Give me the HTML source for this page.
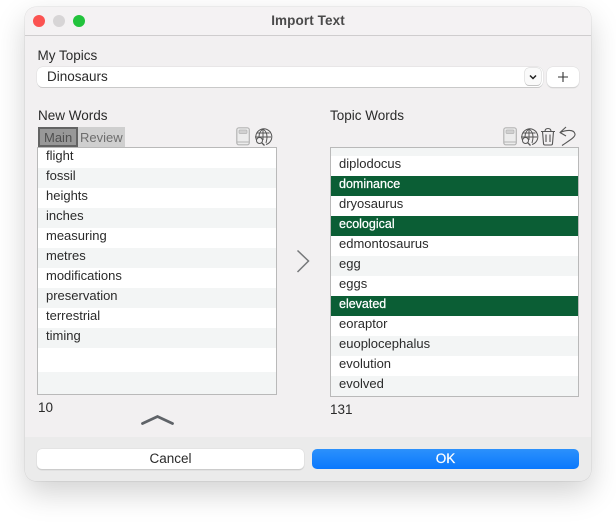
<!DOCTYPE html>
<html><head><meta charset="utf-8"><style>
html,body{margin:0;padding:0;background:#fff;width:616px;height:524px;overflow:hidden}
body{position:relative;font-family:"Liberation Sans",sans-serif;font-size:13px;color:#2a2a2a}
.a{position:absolute;white-space:nowrap}
.l{font-size:13.5px}
#win{position:absolute;left:25px;top:7px;width:566px;height:474px;border-radius:11px;background:#f2f0f1;box-shadow:0 0 0 .5px rgba(0,0,0,.1),0 12px 30px rgba(0,0,0,.18);}
.list{position:absolute;background:#fff;border:1px solid #b9b9b9;overflow:hidden;box-sizing:border-box}
.r{position:absolute;left:0;right:0;height:20px;line-height:16px;padding-left:8px;box-sizing:border-box}
.alt{background:#f3f5f5}.g{background:#0b5e35;color:#fff;font-size:12.5px;-webkit-text-stroke:.25px #fff}
svg{position:absolute;overflow:visible}
</style></head><body>
<div id="win"></div>
<div class="a" style="left:25px;top:7px;width:566px;height:29px;background:#f4f2f3;border-radius:11px 11px 0 0;border-bottom:1px solid #cfcdce;box-sizing:border-box"></div>
<div class="a" style="left:25px;top:437px;width:566px;height:44px;background:#ebebeb;border-radius:0 0 11px 11px"></div>
<div class="a" style="left:33px;top:15px;width:12px;height:12px;border-radius:50%;background:#fb5351"></div>
<div class="a" style="left:53px;top:15px;width:12px;height:12px;border-radius:50%;background:#d7d5d6"></div>
<div class="a" style="left:73px;top:15px;width:12px;height:12px;border-radius:50%;background:#22c33c"></div>
<div class="a" style="left:25px;width:566px;top:13px;text-align:center;font-weight:bold;font-size:13.5px;letter-spacing:.1px;color:#4a4a4a">Import Text</div>

<div class="a l" style="left:37.500px;top:48px">My Topics</div>
<div class="a" style="left:37px;top:67px;width:506px;height:20px;background:#fff;border-radius:6px;box-shadow:0 0 0 .5px #ddd,0 1px 0 #b5b5b5"></div>
<div class="a l" style="left:47px;top:69px">Dinosaurs</div>
<div class="a" style="left:525px;top:68px;width:16px;height:17px;background:#fafafa;border-radius:4px;box-shadow:0 0 0 .5px #ccc,0 1px 0 #bbb"></div>
<svg style="left:525px;top:68px" width="16" height="18"><path d="M5 7.500l3 3 3-3" fill="none" stroke="#222" stroke-width="1.500"/></svg>
<div class="a" style="left:547px;top:67px;width:32px;height:20px;background:#fff;border-radius:6px;box-shadow:0 0 0 .5px #ddd,0 1px 1px #bbb"></div>
<svg style="left:547px;top:67px" width="32" height="20"><path d="M16 5v10M11 10h10" stroke="#333" stroke-width="1.100"/></svg>

<div class="a l" style="left:38px;top:108px">New Words</div>
<div class="a" style="left:38px;top:127px;width:87px;height:20px;background:#cfcfcf"></div>
<div class="a" style="left:38px;top:127px;width:40px;height:20px;background:#989898;border:2px solid #636363;box-sizing:border-box"></div>
<div class="a" style="left:44px;top:130px;color:#4f4f4f">Main</div>
<div class="a" style="left:80px;top:130px;color:#6d6d6d">Review</div>

<svg style="left:236px;top:127px" width="15" height="19" fill="none"><rect x=".8" y=".8" width="12.500" height="17" rx="2" stroke="#b4b4b4" stroke-width="1.200" fill="#ececec"/><rect x="3" y="3" width="8" height="3.500" rx="1" fill="#d0d0d0" stroke="#b4b4b4" stroke-width=".7"/><path d="M1 15h12" stroke="#b4b4b4"/></svg>
<svg style="left:254px;top:128px" width="19" height="18" fill="none" stroke="#555" stroke-width="1"><path d="M3 13A8 8 0 1 1 12 16.500"/><path d="M1 9h16M2.500 5h13M9 1v11M9 1c-3 2-4 5-4 8M9 1c3 2 4 5 4 8c0 2-.5 4-1 6"/><circle cx="5.500" cy="12.500" r="3" fill="#f2f0f1"/><path d="M7.800 14.800l2.700 2.700" stroke-width="1.300"/></svg>

<div class="list" style="left:37px;top:147px;width:240px;height:248px">
<div class="r" style="top:0">flight</div>
<div class="r alt" style="top:20px">fossil</div>
<div class="r" style="top:40px">heights</div>
<div class="r alt" style="top:60px">inches</div>
<div class="r" style="top:80px">measuring</div>
<div class="r alt" style="top:100px">metres</div>
<div class="r" style="top:120px">modifications</div>
<div class="r alt" style="top:140px">preservation</div>
<div class="r" style="top:160px">terrestrial</div>
<div class="r alt" style="top:180px">timing</div>
<div class="r alt" style="top:224px;height:24px"></div>
</div>
<div class="a l" style="left:38px;top:400px">10</div>
<svg style="left:141px;top:414px" width="34" height="14" fill="none"><path d="M1.500 9.500L16.500 2.500L31.500 9.500" stroke="#5f6368" stroke-width="2.800" stroke-linecap="round"/></svg>

<svg style="left:296px;top:249px" width="16" height="24" fill="none"><path d="M1.500 1.500L12.500 12L1.500 23" stroke="#76787a" stroke-width="1.500"/></svg>

<div class="a l" style="left:330px;top:108px">Topic Words</div>
<svg style="left:503px;top:127px" width="15" height="19" fill="none"><rect x=".8" y=".8" width="12.500" height="17" rx="2" stroke="#b4b4b4" stroke-width="1.200" fill="#ececec"/><rect x="3" y="3" width="8" height="3.500" rx="1" fill="#d0d0d0" stroke="#b4b4b4" stroke-width=".7"/><path d="M1 15h12" stroke="#b4b4b4"/></svg>
<svg style="left:520px;top:128px" width="19" height="18" fill="none" stroke="#555" stroke-width="1"><path d="M3 13A8 8 0 1 1 12 16.500"/><path d="M1 9h16M2.500 5h13M9 1v11M9 1c-3 2-4 5-4 8M9 1c3 2 4 5 4 8c0 2-.5 4-1 6"/><circle cx="5.500" cy="12.500" r="3" fill="#f2f0f1"/><path d="M7.800 14.800l2.700 2.700" stroke-width="1.300"/></svg>
<svg style="left:540px;top:127px" width="16" height="19" fill="none" stroke="#555" stroke-width="1.100"><path d="M1 4.500h14M5 4.500c0-2 1-3 3-3s3 1 3 3M2.500 4.500l1 12c0 1 .6 1.500 1.500 1.500h6c.9 0 1.500-.5 1.500-1.500l1-12M6 7.500v7.500M10 7.500v7.500"/></svg>
<svg style="left:558px;top:126px" width="18" height="20" fill="none" stroke="#555" stroke-width="1.100"><path d="M8 1L2 6.500L8 10M2 6.500C8 4 16 3 17 8C17.500 11 12 14 4 19.500" stroke-linejoin="round"/></svg>

<div class="list" style="left:330px;top:147px;width:249px;height:250px">
<div class="r alt" style="top:0;height:8px"></div>
<div class="r" style="top:8px">diplodocus</div>
<div class="r g" style="top:28px">dominance</div>
<div class="r" style="top:48px">dryosaurus</div>
<div class="r g" style="top:68px">ecological</div>
<div class="r" style="top:88px">edmontosaurus</div>
<div class="r alt" style="top:108px">egg</div>
<div class="r" style="top:128px">eggs</div>
<div class="r g" style="top:148px">elevated</div>
<div class="r" style="top:168px">eoraptor</div>
<div class="r alt" style="top:188px">euoplocephalus</div>
<div class="r" style="top:208px">evolution</div>
<div class="r alt" style="top:228px">evolved</div>
</div>
<div class="a l" style="left:330px;top:402px">131</div>

<div class="a l" style="left:37px;top:449px;width:267px;height:20px;line-height:20px;background:#fff;border-radius:5px;box-shadow:0 0 0 .5px #ddd,0 1px 1px #aaa;text-align:center">Cancel</div>
<div class="a l" style="left:312px;top:449px;width:267px;height:20px;line-height:20px;background:linear-gradient(#2c91fb,#0a78fd);border-radius:5px;color:#fff;text-align:center;font-size:13.500px;-webkit-text-stroke:.2px #fff">OK</div>
</body></html>
